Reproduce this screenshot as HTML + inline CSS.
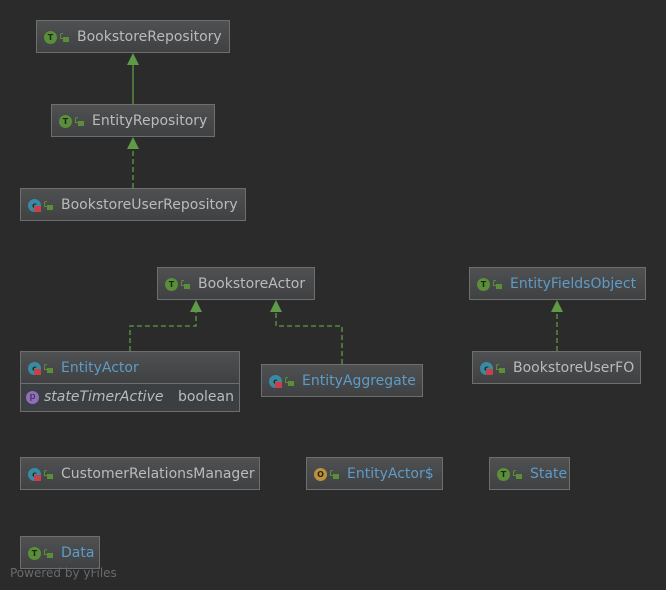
<!DOCTYPE html>
<html><head><style>
body{margin:0;width:666px;height:590px;background:#2b2b2b;position:relative;overflow:hidden;font-family:"DejaVu Sans","Liberation Sans",sans-serif}
.b{position:absolute;height:33px;border:1px solid #6e6e6e;background:linear-gradient(#4e5052,#3f4143);box-sizing:border-box;color:#bbbbbb;font-size:14px;line-height:33px;padding-left:40px;white-space:nowrap}
.b.blue{color:#5f9bc7}
.ic{position:absolute;left:7px;top:10px;width:13px;height:13px;border-radius:50%;background:#5a8e3a;color:#1c2a12;font-size:8px;line-height:13px;text-align:center;font-weight:bold}
.ic.c{background:#3a8aa6}
.ic.c::after{content:"";position:absolute;left:6px;top:7px;width:7px;height:6px;background:#c7414a}
.ic.o{background:#c08f3c}
.lk{position:absolute;left:26px;top:16px;width:6px;height:5px;background:#5a8e3a;line-height:0}
.lk::before{content:"";position:absolute;left:-3px;top:-4px;width:2px;height:4px;border:1px solid #5a8e3a;border-right:none;border-radius:2px 0 0 0}
svg{position:absolute;left:0;top:0}
</style></head><body>
<svg width="666" height="590">
<g stroke="#5f9a46" stroke-width="1.3" fill="none">
<line x1="133" y1="104" x2="133" y2="64"/>
<line x1="133" y1="188" x2="133" y2="148" stroke-dasharray="5,3"/>
<path d="M130 351V326H196V311" stroke-dasharray="5,3"/>
<path d="M342 364V326H276V311" stroke-dasharray="5,3"/>
<line x1="557" y1="351" x2="557" y2="311" stroke-dasharray="5,3"/>
</g>
<g fill="#5f9a46">
<path d="M133 53l-6 12h12z"/><path d="M133 137l-6 12h12z"/>
<path d="M196 300l-6 12h12z"/><path d="M276 300l-6 12h12z"/><path d="M557 300l-6 12h12z"/>
</g>
</svg>
<div class="b" style="left:36px;top:20px;width:194px"><span class="ic">T</span><span class="lk"></span>BookstoreRepository</div>
<div class="b" style="left:51px;top:104px;width:164px"><span class="ic">T</span><span class="lk"></span>EntityRepository</div>
<div class="b" style="left:20px;top:188px;width:226px"><span class="ic c">c</span><span class="lk"></span>BookstoreUserRepository</div>
<div class="b" style="left:157px;top:267px;width:158px"><span class="ic">T</span><span class="lk"></span>BookstoreActor</div>
<div class="b blue" style="left:469px;top:267px;width:177px"><span class="ic">T</span><span class="lk"></span>EntityFieldsObject</div>
<div class="b blue" style="left:20px;top:351px;width:220px"><span class="ic c">c</span><span class="lk"></span>EntityActor</div>
<div style="position:absolute;left:20px;top:383px;width:220px;height:29px;box-sizing:border-box;border:1px solid #6e6e6e;background:#3c3f41;color:#bbb;font-size:14px;line-height:27px">
<span style="position:absolute;left:5px;top:7px;width:13px;height:13px;border-radius:50%;background:#8e6fb8;font-size:9px;line-height:13px;text-align:center;color:#2a1f3a">p</span>
<span style="position:absolute;left:23px;font-style:italic">stateTimerActive</span><span style="position:absolute;right:5px">boolean</span></div>
<div class="b blue" style="left:261px;top:364px;width:162px"><span class="ic c">c</span><span class="lk"></span>EntityAggregate</div>
<div class="b" style="left:472px;top:351px;width:169px"><span class="ic c">c</span><span class="lk"></span>BookstoreUserFO</div>
<div class="b" style="left:20px;top:457px;width:240px"><span class="ic c">c</span><span class="lk"></span>CustomerRelationsManager</div>
<div class="b blue" style="left:306px;top:457px;width:137px"><span class="ic o">O</span><span class="lk"></span>EntityActor$</div>
<div class="b blue" style="left:489px;top:457px;width:81px"><span class="ic">T</span><span class="lk"></span>State</div>
<div class="b blue" style="left:20px;top:536px;width:80px"><span class="ic">T</span><span class="lk"></span>Data</div>
<div style="position:absolute;left:10px;top:566px;color:#6a6a6a;font-size:12px">Powered by yFiles</div>
</body></html>
